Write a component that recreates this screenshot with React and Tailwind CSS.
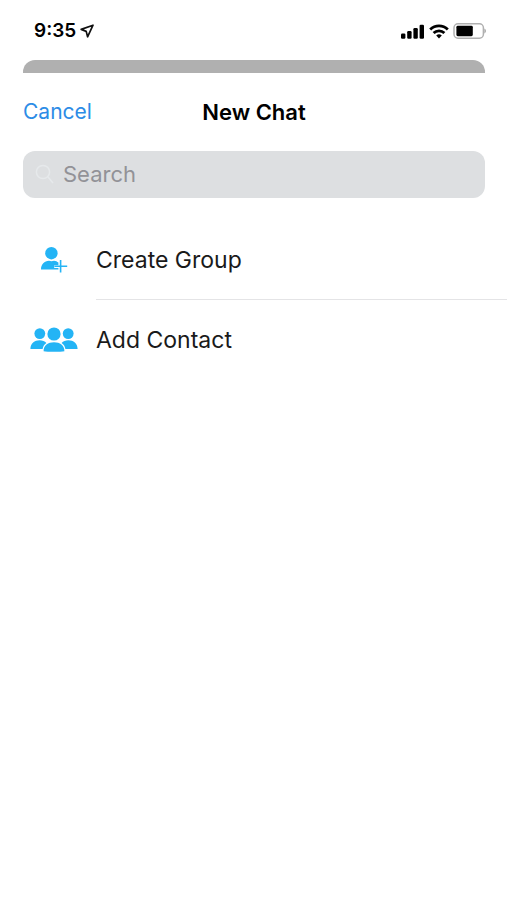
import { useState } from 'react'

function LocationArrow() {
  return (
    <svg viewBox="0 0 14 14" className="size-[14px]" fill="none" stroke="#111" strokeWidth="1.7" strokeLinejoin="round" aria-hidden>
      <path d="M13 1.2 1.2 5.4 6.2 7.4 7.6 12.8Z" />
    </svg>
  )
}

function SignalBars() {
  return (
    <svg viewBox="0 0 24 15" className="h-[15px] w-6" fill="#000" aria-hidden>
      <rect x="0" y="9.5" width="4.4" height="5.2" rx="1.2" />
      <rect x="6.2" y="7" width="4.4" height="7.7" rx="1.2" />
      <rect x="12.4" y="4" width="4.4" height="10.7" rx="1.2" />
      <rect x="18.6" y="0.8" width="4.4" height="13.9" rx="1.2" />
    </svg>
  )
}

function Wifi() {
  return (
    <svg viewBox="0 0 20 15" className="h-[15px] w-5" fill="none" stroke="#000" strokeWidth="2.8" aria-hidden>
      <path d="M1.2 5.4a12.6 12.6 0 0 1 17.6 0" />
      <path d="M4.6 9.1a7.7 7.7 0 0 1 10.8 0" />
      <path d="M10 14.4 7.2 11.6a4.2 4.2 0 0 1 5.6 0Z" fill="#000" stroke="none" />
    </svg>
  )
}

function Battery() {
  return (
    <svg viewBox="0 0 34 16" className="h-4 w-[34px]" aria-hidden>
      <rect x="1" y="0.8" width="29.4" height="14.4" rx="4" fill="none" stroke="#b0b0b0" strokeWidth="1.5" />
      <rect x="3.4" y="2.8" width="16.4" height="10.4" rx="1.4" fill="#000" />
      <path d="M31.4 5.6v4.8c2-.8 2-4 0-4.8Z" fill="#a3a3a3" />
    </svg>
  )
}

function PersonPlus() {
  return (
    <svg viewBox="0 0 28 28" className="size-7" fill="#24b4f5" aria-hidden>
      <ellipse cx="11.4" cy="7.2" rx="6.2" ry="6.2" />
      <path d="M1 23.4c0-5 3.400-8.200 8-8.600 1.600.6 3.400.6 5 0 1.800.2 3.200.8 4.400 1.800v2.600h-4.200v2.800h4.200v1.400Z" />
      <path d="M20.600 14v12.600M14.400 20.300h12.800" stroke="#24b4f5" strokeWidth="1.600" />
    </svg>
  )
}

function People() {
  return (
    <svg viewBox="0 0 48 26" className="h-[26px] w-12" fill="#24b4f5" aria-hidden>
      <circle cx="9.800" cy="6.600" r="5.400" />
      <circle cx="38.200" cy="6.600" r="5.400" />
      <path d="M.4 22c0-6 4.200-8.800 9.200-8.800 2.800 0 5.200 1 6.800 2.800-2.200 1.400-3.400 3.400-3.800 6Z" />
      <path d="M47.600 22c0-6-4.200-8.800-9.200-8.800-2.800 0-5.200 1-6.800 2.800 2.200 1.400 3.400 3.400 3.800 6Z" />
      <circle cx="24" cy="7" r="6.600" />
      <path d="M13.600 24.200c0-6.200 4.400-9 10.400-9s10.400 2.800 10.400 9c-3.600.8-17.200.8-20.800 0Z" />
    </svg>
  )
}

const ACTIONS = [
  { id: 'group', label: 'Create Group', icon: PersonPlus },
  { id: 'contact', label: 'Add Contact', icon: People },
]

function StatusBar() {
  return (
    <div className="flex h-[60px] items-center justify-between pt-[2px] pr-5 pl-[34px]">
      <div className="flex items-center gap-1">
        <span className="text-[19px] leading-6 font-semibold">9:35</span>
        <LocationArrow />
      </div>
      <div className="flex items-center gap-1">
        <SignalBars />
        <Wifi />
        <Battery />
      </div>
    </div>
  )
}

export default function App() {
  const [query, setQuery] = useState('')

  return (
    <div className="min-h-screen bg-white font-['Inter','Liberation_Sans',sans-serif] text-black">
      <StatusBar />
      <div className="mr-[22px] ml-[23px] h-[13px] rounded-t-xl bg-[#b0b0b0]" />

      <main>
        <header className="mr-[22px] ml-[23px] grid h-[78px] grid-cols-[1fr_auto_1fr] items-center">
          <button type="button" className="justify-self-start text-[21px] leading-7 text-[#2c8ce6]">
            Cancel
          </button>
          <h1 className="text-[22px] leading-7 font-semibold">New Chat</h1>
        </header>

        <div className="mr-[22px] ml-[23px] flex h-[47px] items-center gap-2 rounded-xl bg-[#dddfe1] pb-[2px] pl-3">
          <label htmlFor="chat-search" aria-label="Search" className="shrink-0">
            <svg viewBox="0 0 20 20" className="size-5" fill="none" stroke="#e6e9eb" strokeWidth="1.500" aria-hidden>
              <circle cx="8" cy="8" r="6.600" />
              <path d="m13 13 5 6" />
            </svg>
          </label>
          <input
            id="chat-search"
            type="search"
            aria-label="Search"
            value={query}
            onChange={(e) => setQuery(e.target.value)}
            placeholder="Search"
            className="w-full min-w-0 bg-transparent text-[22px] leading-7 placeholder:text-[#929297] focus:outline-none"
          />
        </div>

        <ul className="mt-[22px]">
          {ACTIONS.map((action) => {
            const Icon = action.icon
            return (
              <li key={action.id} className="group flex pl-[23px]">
                <button type="button" className="flex w-full items-center text-left text-[23px] leading-7 text-[#1a1a1a]">
                  <span className="flex w-[73px] shrink-0 justify-center pr-3">
                    <Icon />
                  </span>
                  <span className="flex h-20 grow items-center border-b border-[#e4e4e6] group-last:border-b-0">
                    {action.label}
                  </span>
                </button>
              </li>
            )
          })}
        </ul>
      </main>
    </div>
  )
}
